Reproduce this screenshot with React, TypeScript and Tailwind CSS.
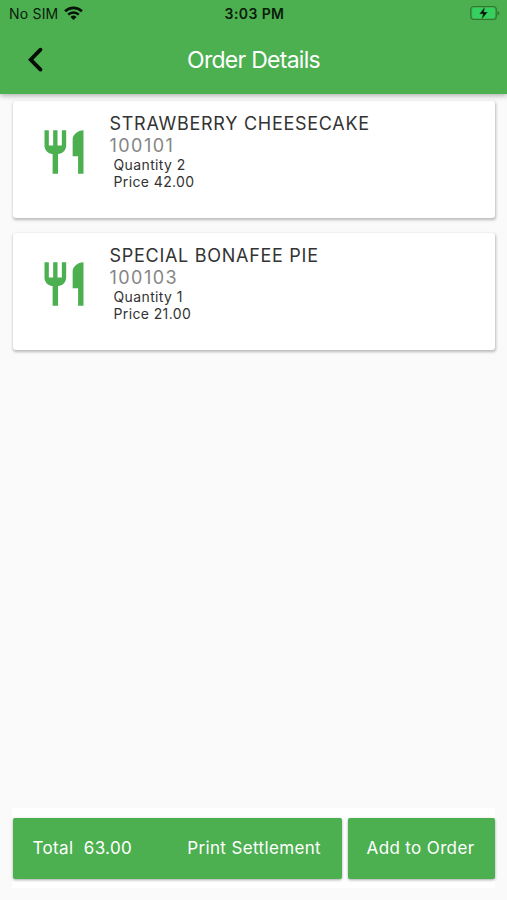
type OrderItem = {
  name: string;
  code: string;
  quantity: number;
  price: string;
};

const items: OrderItem[] = [
  { name: 'STRAWBERRY CHEESECAKE', code: '100101', quantity: 2, price: '42.00' },
  { name: 'SPECIAL BONAFEE PIE', code: '100103', quantity: 1, price: '21.00' },
];

function StatusBar() {
  return (
    <div className="flex h-7 items-center justify-between pr-[7px] pl-[9px] text-[#0a1c0b]">
      <div className="flex w-[120px] items-center gap-[6px]">
        <span className="text-[14px] leading-7 tracking-[0.2px]">No SIM</span>
        <svg className="-mt-[2px]" fill="none" height="14" viewBox="0 0 19 14" width="19">
          <path d="M1.1 5.300a12 12 0 0 1 16.800 0" stroke="#061307" strokeWidth="2.7" />
          <path d="M4.200 8.700a7.500 7.500 0 0 1 10.600 0" stroke="#061307" strokeWidth="2.5" />
          <path d="M9.5 14l-3-3.100a4.300 4.300 0 0 1 6 0z" fill="#061307" />
        </svg>
      </div>
      <span className="text-[14px] leading-7 font-semibold tracking-[0.4px]">3:03 PM</span>
      <div className="flex w-[120px] justify-end">
        <svg className="-mt-[2px]" fill="none" height="16" viewBox="0 0 30 16" width="30">
          <rect height="13" rx="3" stroke="#2b7a31" strokeWidth="1.2" width="25.5" x="0.8" y="1.5" />
          <rect fill="#34d160" height="10" rx="1.5" width="22.5" x="2.3" y="3" />
          <path d="M27.5 6v4.5c1.2-.4 1.9-1.2 1.9-2.25S28.7 6.4 27.5 6z" fill="#2b7a31" />
          <path
            d="M15.2 1.6L9.300 9h3.700l-1.500 5.400L17.700 7h-3.900z"
            fill="#041006"
            stroke="#4caf50"
            strokeWidth="0.4"
          />
        </svg>
      </div>
    </div>
  );
}

function Header() {
  return (
    <header className="relative z-10 h-[94px] shrink-0 bg-[#4caf50] shadow-[0_2px_5px_rgba(0,0,0,0.28)]">
      <StatusBar />
      <div className="grid h-16 grid-cols-[80px_1fr_80px] items-center">
        <button className="pl-[27px]" title="Back" type="button">
          <svg fill="none" height="26" viewBox="0 0 17 26" width="17">
            <path
              d="M13.500 2.700L3.700 12.700l9.800 9.900"
              stroke="#050d05"
              strokeLinecap="round"
              strokeWidth="3.800"
            />
          </svg>
        </button>
        <h1 className="text-center text-[23px] leading-8 tracking-[-0.72px] text-white">
          Order Details
        </h1>
      </div>
    </header>
  );
}

function ItemCard({ item }: { item: OrderItem }) {
  return (
    <li className="flex h-[117px] rounded-[3px] bg-white pl-[24.5px] shadow-[0.5px_1.5px_3px_rgba(0,0,0,0.26)]">
      <svg className="mt-[25px] shrink-0" fill="#4caf50" height="52" viewBox="0 0 24 24" width="52">
        <path d="M11 9H9V2H7v7H5V2H3v7c0 2.12 1.66 3.84 3.75 3.97V22h2.5v-9.03C11.34 12.84 13 11.12 13 9V2h-2v7zm5-3v8h2.5v8H21V2c-2.76 0-5 2.24-5 4z" />
      </svg>
      <div className="ml-5 pt-[11.5px]">
        <p className="text-[18px] leading-[22px] tracking-[0.72px] text-[#333]">{item.name}</p>
        <p className="text-[18px] leading-[22px] tracking-[1.45px] text-[#858585]">{item.code}</p>
        <div className="-mt-[0.5px] pl-1 text-[14px] leading-[17px] tracking-[0.38px] text-[#333]">
          <p>Quantity {item.quantity}</p>
          <p>Price {item.price}</p>
        </div>
      </div>
    </li>
  );
}

function Footer() {
  return (
    <footer className="mx-3 mb-3 flex h-20 shrink-0 gap-[6px] bg-white pt-[10px] pl-px text-[17px] tracking-[0.36px] text-white">
      <button
        className="flex h-[61px] w-[329px] items-center justify-between rounded-[2px] bg-[#4caf50] pr-[21px] pl-[19.5px] shadow-[0_1px_3px_rgba(0,0,0,0.35)]"
        type="button"
      >
        <span className="whitespace-pre">{'Total  63.00'}</span>
        <span>Print Settlement</span>
      </button>
      <button
        className="h-[61px] w-[147px] rounded-[2px] bg-[#4caf50] pr-[2px] shadow-[0_1px_3px_rgba(0,0,0,0.35)]"
        type="button"
      >
        Add to Order
      </button>
    </footer>
  );
}

export default function App() {
  return (
    <div className="flex h-[900px] w-[507px] flex-col overflow-hidden bg-[#fafafa] font-['Inter','Liberation_Sans',sans-serif]">
      <Header />
      <ul className="flex flex-1 flex-col gap-[15px] pt-[7px] pr-3 pl-[13px]">
        {items.map((item) => (
          <ItemCard item={item} key={item.code} />
        ))}
      </ul>
      <Footer />
    </div>
  );
}
